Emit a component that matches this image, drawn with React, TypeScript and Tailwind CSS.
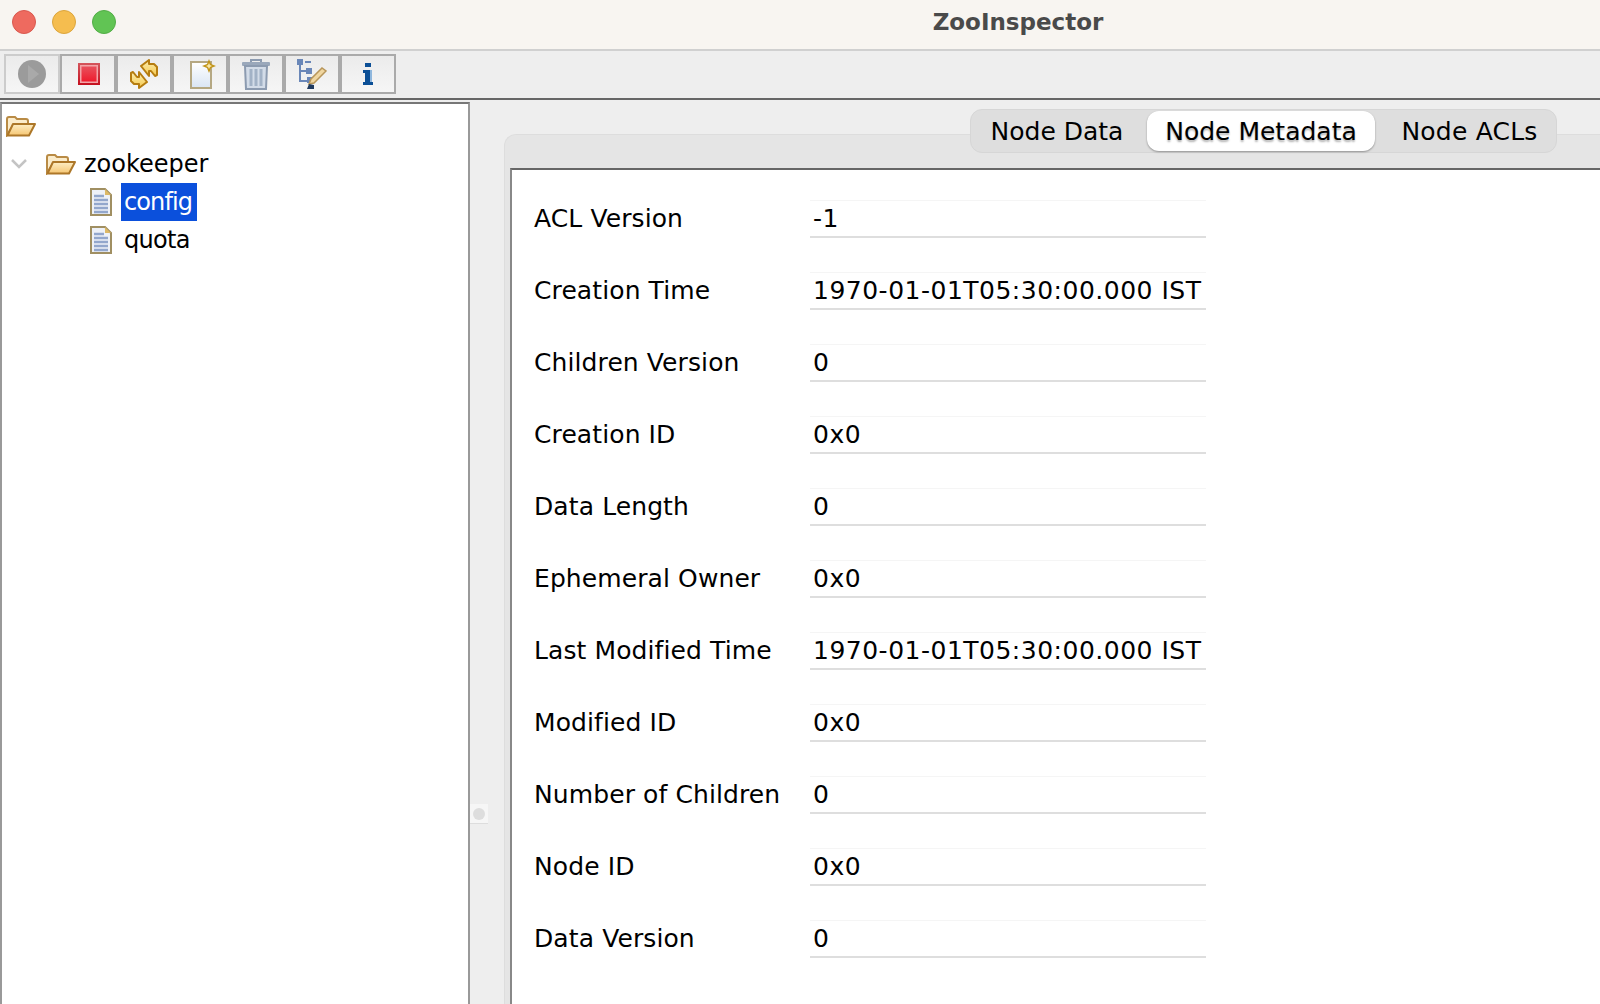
const rows = [
  ['ACL Version', '-1'],
  ['Creation Time', '1970-01-01T05:30:00.000 IST'],
  ['Children Version', '0'],
  ['Creation ID', '0x0'],
  ['Data Length', '0'],
  ['Ephemeral Owner', '0x0'],
  ['Last Modified Time', '1970-01-01T05:30:00.000 IST'],
  ['Modified ID', '0x0'],
  ['Number of Children', '0'],
  ['Node ID', '0x0'],
  ['Data Version', '0'],
];

const FolderIcon = () => (
  <svg width="30" height="22" viewBox="0 0 30 22" className="shrink-0">
    <defs>
      <linearGradient id="folderFront" x1="0" y1="0" x2="0" y2="1">
        <stop offset="0" stopColor="#fdeec6" />
        <stop offset="1" stopColor="#f6c672" />
      </linearGradient>
    </defs>
    <path d="M1 20V4q0-2 2-2h6l2 2h9q2 0 2 2v3H8L1 20z" fill="#fbeccb" stroke="#b98b45" strokeWidth="2" />
    <path d="M1.5 20.5 7 9h22l-6 11.5z" fill="url(#folderFront)" stroke="#ad7728" strokeWidth="2" strokeLinejoin="round" />
  </svg>
);

const FileIcon = () => (
  <svg width="22" height="28" viewBox="0 0 22 28" className="shrink-0">
    <path d="M1 1h14l6 6v20H1z" fill="#eef1f7" stroke="#a08f62" strokeWidth="2" />
    <path d="M15 1l6 6h-6z" fill="#dcb866" />
    <path d="M4 8h10M4 12h14M4 16h14M4 20h14M4 24h14" stroke="#93a7cc" strokeWidth="2.5" />
  </svg>
);

const PlayIcon = () => (
  <svg width="28" height="28" viewBox="0 0 28 28">
    <circle cx="14" cy="14" r="14" fill="#9b9b9b" />
    <path d="M10 5l11 9-11 9z" fill="#a9a9a9" />
  </svg>
);

const StopIcon = () => (
  <svg width="22" height="22" viewBox="0 0 22 22" className="ml-0.5">
    <defs>
      <linearGradient id="stopOuter" x1="0" y1="0" x2="0" y2="1">
        <stop offset="0" stopColor="#d4555c" />
        <stop offset="1" stopColor="#c5101f" />
      </linearGradient>
      <linearGradient id="stopInner" x1="0" y1="0" x2="0" y2="1">
        <stop offset="0" stopColor="#e8505c" />
        <stop offset="1" stopColor="#ee1c2e" />
      </linearGradient>
    </defs>
    <rect width="22" height="22" fill="url(#stopOuter)" />
    <rect x="2" y="2" width="18" height="18" fill="#f3a4a8" />
    <rect x="3.5" y="3.5" width="15" height="15" fill="url(#stopInner)" />
  </svg>
);

const RefreshIcon = () => (
  <svg width="28" height="30" viewBox="0 0 28 30">
    <defs>
      <linearGradient id="arrowFill" x1="0" y1="0" x2="0" y2="1">
        <stop offset="0" stopColor="#fdeeb0" />
        <stop offset="1" stopColor="#f5c94f" />
      </linearGradient>
    </defs>
    <path d="M11 7l8-6v4h5l3 3v8l-2 1-4-5h-2v5z" fill="url(#arrowFill)" stroke="#b67d10" strokeWidth="2" strokeLinejoin="round" />
    <path d="M17 23l-8 6v-4H4l-3-3v-8l2-1 4 5h2v-5z" fill="url(#arrowFill)" stroke="#b67d10" strokeWidth="2" strokeLinejoin="round" />
  </svg>
);

const NewFileIcon = () => (
  <svg width="26" height="30" viewBox="0 0 26 30" className="ml-1.5">
    <defs>
      <linearGradient id="newFileFill" x1="0" y1="0" x2="0" y2="1">
        <stop offset="0" stopColor="#ffffff" />
        <stop offset="1" stopColor="#d9e5f4" />
      </linearGradient>
    </defs>
    <rect x="1" y="3" width="20" height="26" fill="url(#newFileFill)" stroke="#b5a883" strokeWidth="2" />
    <path d="M19 0l2 5 5 2-5 2-2 5-2-5-5-2 5-2z" fill="#c2951a" />
    <path d="M19 4l1 2 2 1-2 1-1 2-1-2-2-1 2-1z" fill="#f8e7a9" />
  </svg>
);

const TrashIcon = () => (
  <svg width="28" height="32" viewBox="0 0 28 32">
    <path d="M9 4V2h10v2" fill="none" stroke="#8c9bb0" strokeWidth="2" />
    <rect x="0" y="4" width="28" height="4" rx="1" fill="#9aa8bb" />
    <path d="M3 8h22l-1 23H4z" fill="#d3dce8" stroke="#8c9bb0" strokeWidth="2" />
    <path d="M9 11v17M14 11v17M19 11v17" stroke="#a2b2c6" strokeWidth="3" />
  </svg>
);

const TreeEditIcon = () => (
  <svg width="30" height="30" viewBox="0 0 30 30">
    <path d="M3 6v16h8M3 12h8" fill="none" stroke="#6a87b8" strokeWidth="2" />
    <rect x="0" y="0" width="6" height="6" fill="#6a87b8" />
    <rect x="9" y="9" width="6" height="6" fill="#6a87b8" />
    <rect x="10" y="18" width="6" height="6" fill="#6a87b8" />
    <path d="M8 3h6" stroke="#6a87b8" strokeWidth="2" />
    <path d="M12 25l2-5 11-11 4 3-12 12z" fill="#f0d6a0" stroke="#b8965a" strokeWidth="1.5" />
    <path d="M10 30l2-5 5 1v4z" fill="#1f3a5f" />
  </svg>
);

const InfoIcon = () => (
  <svg width="10" height="22" viewBox="0 0 10 22">
    <rect x="2" y="0" width="6" height="4" fill="#0b4f96" />
    <path d="M0 7h7v12h3v3H0v-3h2v-9H0z" fill="#0b4f96" />
    <rect x="7" y="7" width="2" height="12" fill="#8fb7dd" />
  </svg>
);

const tools = [
  { icon: <PlayIcon />, disabled: true },
  { icon: <StopIcon /> },
  { icon: <RefreshIcon /> },
  { icon: <NewFileIcon /> },
  { icon: <TrashIcon /> },
  { icon: <TreeEditIcon /> },
  { icon: <InfoIcon /> },
];

const App = () => {
  return (
    <div className="w-[1600px] h-[1004px] overflow-hidden flex flex-col bg-[#eeeeee] text-black font-['DejaVu_Sans',sans-serif]">
      {/* Title bar */}
      <div className="h-[51px] shrink-0 flex items-start pt-[10px] bg-[#f8f5f1] border-b-2 border-[#d0d0d0] relative">
        <div className="flex gap-4 pl-3">
          <div className="w-6 h-6 rounded-full bg-[#ee6a5f] border border-[#d9584e]"></div>
          <div className="w-6 h-6 rounded-full bg-[#f5bd4f] border border-[#dca53c]"></div>
          <div className="w-6 h-6 rounded-full bg-[#61c454] border border-[#52ad46]"></div>
        </div>
        <div className="absolute left-[436px] right-0 top-0 h-[44px] flex items-center justify-center text-[23px] font-bold text-[#4a4a4a]">
          ZooInspector
        </div>
      </div>

      {/* Toolbar */}
      <div className="h-[49px] shrink-0 flex items-start pt-[3px] pl-1 border-b-2 border-[#666666]">
        {tools.map((tool, index) => (
          <div
            key={index}
            className={`w-14 h-10 flex items-center justify-center border-2 bg-gradient-to-b from-[#ebebeb] to-[#f6f6f6] ${
              tool.disabled ? 'border-[#cccccc]' : 'border-[#aaaaaa]'
            }`}
          >
            {tool.icon}
          </div>
        ))}
      </div>

      <div className="flex-1 flex min-h-0">
        {/* Tree */}
        <div className="w-[470px] shrink-0 mt-[2px] bg-white border-t-2 border-l-2 border-r-2 border-t-[#777777] border-l-[#999999] border-r-[#999999] pt-[3px] text-[24px]">
          <div className="h-[38px] flex items-center pl-1">
            <FolderIcon />
          </div>
          <div className="h-[38px] flex items-center">
            <svg width="18" height="12" viewBox="0 0 18 12" className="ml-2 mr-[18px] shrink-0">
              <path d="M2 2l7 7 7-7" fill="none" stroke="#c4c4c4" strokeWidth="2.5" />
            </svg>
            <FolderIcon />
            <span className="ml-2">zookeeper</span>
          </div>
          <div className="h-[38px] flex items-center pl-[88px]">
            <FileIcon />
            <span className="ml-[9px] h-[38px] pl-[3px] pr-[5px] flex items-center bg-[#0b50dc] text-white tracking-[-0.9px]">config</span>
          </div>
          <div className="h-[38px] flex items-center pl-[88px]">
            <FileIcon />
            <span className="ml-[9px] px-[3px] tracking-[-0.7px]">quota</span>
          </div>
        </div>

        {/* Splitter */}
        <div className="w-[34px] shrink-0 relative">
          <div className="absolute left-0 top-[704px] w-[18px] h-5 bg-[#f6f6f6] border-b border-[#dddddd] flex items-center justify-center">
            <div className="w-3 h-3 rounded-full bg-[#dddddd]"></div>
          </div>
        </div>

        {/* Tabbed pane */}
        <div className="flex-1 min-w-0 relative pt-[34px]">
          <div className="absolute left-[466px] top-[9px] w-[587px] h-11 rounded-xl bg-[#dedede] border border-[#d6d6d6] flex items-center text-[25px] z-10">
            <div className="w-[176px] pr-1 pt-px text-center">Node Data</div>
            <div className="w-[228px] h-10 pt-px rounded-xl bg-white shadow-[0_1px_2px_rgba(0,0,0,0.35)] flex items-center justify-center [text-shadow:0_2px_2px_rgba(0,0,0,0.3)]">Node Metadata</div>
            <div className="flex-1 pl-2 pt-px text-center tracking-[0.2px]">Node ACLs</div>
          </div>
          <div className="h-full rounded-tl-xl bg-[#e5e5e5] border-t border-l border-[#dddddd] pl-[5px] pt-[33px]">
            <div className="h-full bg-white border-t-2 border-l-2 border-t-[#666666] border-l-[#888888] pt-[30px] pl-[22px] text-[25px]">
              {rows.map(([label, value]) => (
                <div key={label} className="h-[72px] flex items-start">
                  <div className="w-[276px] h-[38px] flex items-center shrink-0 tracking-[0.1px]">{label}</div>
                  <div className="w-[396px] h-[38px] flex items-center pl-[3px] tracking-[0.5px] border-t border-[#f5f5f5] border-b-2 border-b-[#dedede]">{value}</div>
                </div>
              ))}
            </div>
          </div>
        </div>
      </div>
    </div>
  );
};

export default App;
